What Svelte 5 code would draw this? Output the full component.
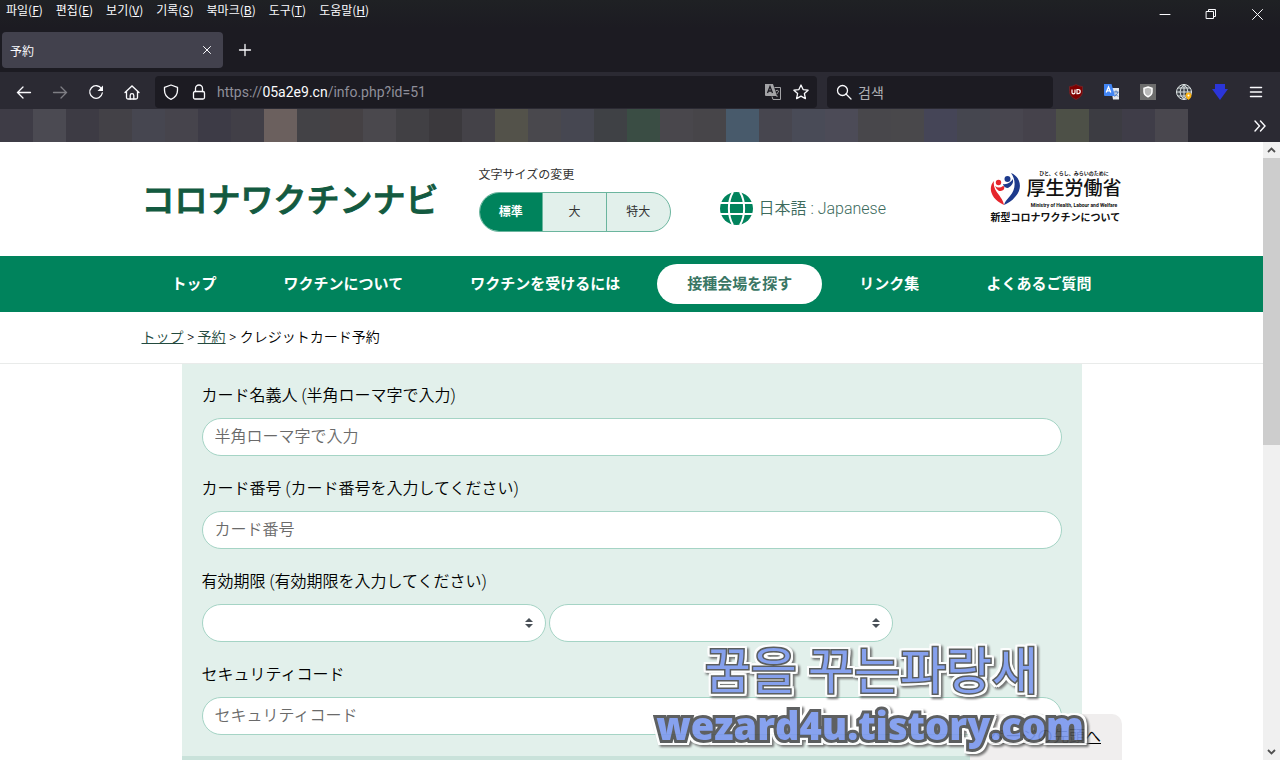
<script>
	let fontSize = $state('標準');
	let sizes = ['標準', '大', '特大'];

	let menus = [
		['파일', 'F'],
		['편집', 'E'],
		['보기', 'V'],
		['기록', 'S'],
		['북마크', 'B'],
		['도구', 'T'],
		['도움말', 'H']
	];

	let nav = [
		'トップ',
		'ワクチンについて',
		'ワクチンを受けるには',
		'接種会場を探す',
		'リンク集',
		'よくあるご質問'
	];
	let current = '接種会場を探す';

	let bookmarks = [
		'#3e3c46', '#4b4a52', '#3d3b44', '#434147', '#464650', '#46444c',
		'#3d3b46', '#413f47', '#6b605e', '#434246', '#454144', '#4a484d',
		'#414044', '#3b393d', '#444248', '#53524a', '#49484d', '#464751',
		'#3f4145', '#3a4d44', '#49474c', '#474549', '#485a6b', '#47464f',
		'#494b57', '#4c4b57', '#48474b', '#49484b', '#454557', '#45464f',
		'#48464f', '#45424b', '#4d5047', '#3c3c42', '#3f3d48', '#49474e'
	];
</script>

<div class="window">
	<header class="chrome">
		<div class="titlebar">
			<nav class="menus" aria-label="menu">
				{#each menus as [name, key]}
					<button>{name}(<u>{key}</u>)</button>
				{/each}
			</nav>
			<div class="controls">
				<button aria-label="minimize">
					<svg width="11" height="11" viewBox="0 0 11 11"><path d="M0 5.5h10" /></svg>
				</button>
				<button aria-label="restore">
					<svg width="11" height="11" viewBox="0 0 11 11"><path d="M.5 2.5h7v7h-7zM2.500 2.500v-2h7v7h-2" /></svg>
				</button>
				<button aria-label="close">
					<svg width="11" height="11" viewBox="0 0 11 11"><path d="M.5.5l10 10M10.500.5l-10 10" /></svg>
				</button>
			</div>
		</div>

		<div class="tabs">
			<div class="tab">
				<span>予約</span>
				<button aria-label="close tab">
					<svg width="10" height="10" viewBox="0 0 10 10"><path d="M1.500 1.500l7 7M8.500 1.500l-7 7" /></svg>
				</button>
			</div>
			<button class="new-tab" aria-label="new tab">
				<svg width="14" height="14" viewBox="0 0 14 14"><path d="M7 1.500v11M1.500 7h11" stroke-width="1.300" /></svg>
			</button>
		</div>

		<div class="toolbar">
			<button aria-label="back">
				<svg class="icon" viewBox="0 0 16 16"><path d="M14.500 8.500h-13M7 3L1.500 8.500 7 14" /></svg>
			</button>
			<button class="dim" aria-label="forward">
				<svg class="icon" viewBox="0 0 16 16"><path d="M1.500 8.500h13M9 3l5.500 5.500L9 14" /></svg>
			</button>
			<button aria-label="reload">
				<svg class="icon" viewBox="0 0 16 16">
					<path d="M13.500 4.800A6.300 6.300 0 1 0 14.300 9" />
					<path d="M15 1.500v5.500H9.500z" fill="currentColor" stroke="none" />
				</svg>
			</button>
			<button aria-label="home">
				<svg class="icon" viewBox="0 0 16 16">
					<path d="M1 8.500L8 2l7 6.500M2.500 7.500v6q0 1.500 1.500 1.500h8q1.500 0 1.500-1.500v-6" />
					<path d="M6.200 15v-3.500q0-1.800 1.800-1.800t1.800 1.800V15" />
				</svg>
			</button>

			<div class="field url">
				<button aria-label="protection">
					<svg class="icon" viewBox="0 0 16 16"><path d="M8 1l6.500 2.300v3C14.500 10.500 12 13.800 8 15.300 4 13.800 1.500 10.500 1.500 6.300v-3z" stroke-linejoin="round" /></svg>
				</button>
				<button aria-label="connection">
					<svg class="icon" viewBox="0 0 16 16">
						<rect x="2.500" y="7.500" width="11" height="7.500" rx="1.500" />
						<path d="M4.500 7.500V4.500a3.500 3.500 0 0 1 7 0v3" />
					</svg>
				</button>
				<span class="address">https://<b>05a2e9.cn</b>/info.php?id=51</span>
				<button aria-label="translate">
					<svg width="16" height="16" viewBox="0 0 16 16">
						<path d="M0 0h8l4 12H1Q0 12 0 11z" fill="#a3a3a6" />
						<path d="M2.500 9L5 2.500 7.500 9M3.300 7h3.400" stroke="#1c1b22" stroke-width="1.300" />
						<path d="M9.500 3.500h6v12H8l-1-3" stroke="#a3a3a6" />
						<path d="M10.500 7q2-1.500 3 0c.4 1-1.500 1.800-1.500 3M12 11.500v1.500" stroke="#a3a3a6" />
					</svg>
				</button>
				<button aria-label="bookmark">
					<svg class="icon" viewBox="0 0 16 16"><path d="M8 1l2.100 4.600 5 .6-3.700 3.400 1 5L8 12.100l-4.400 2.500 1-5L.9 6.200l5-.6z" stroke-linejoin="round" /></svg>
				</button>
			</div>

			<div class="field search">
				<svg class="icon" viewBox="0 0 16 16"><circle cx="6.500" cy="6.500" r="5" /><path d="M10 10l5 5" /></svg>
				<input type="text" placeholder="검색" aria-label="검색" />
			</div>

			<button aria-label="ublock">
				<svg width="16" height="16" viewBox="0 0 16 16">
					<path d="M8 .5q3 2 6.500 2v5q0 5-6.500 8-6.500-3-6.500-8v-5q3.500 0 6.500-2z" fill="#800000" stroke="#6e2226" />
					<path d="M4 5.500v3q0 1.300 1.500 1.300T7 8.500v-3M9 5.500v4.200h1q2.200 0 2.200-2.100T10 5.500z" stroke="#fff" stroke-width="1.200" />
				</svg>
			</button>
			<button aria-label="translator">
				<svg width="16" height="16" viewBox="0 0 16 16">
					<path d="M7 4h8v11.500H9z" fill="#e4e7ec" />
					<path d="M9.500 8h5M12 6.500V8M14 8q-1 3-3.500 4.500M11 9.500l3 3" stroke="#4b76b8" />
					<path d="M0 0h7.500l3.500 12H1q-1 0-1-1z" fill="#4285f4" />
					<path d="M2.200 8.500L4.500 3l2.300 5.500M3 6.800h3" stroke="#fff" stroke-width="1.300" />
				</svg>
			</button>
			<button aria-label="shield">
				<svg width="16" height="16" viewBox="0 0 16 16">
					<path d="M0 0h16v16H0z" fill="#6d6d6d" />
					<path d="M8 3l4 1.300v3.500q0 3.200-4 5-4-1.800-4-5V4.300z" fill="#b9b9b9" stroke="#fff" stroke-width="1.500" />
				</svg>
			</button>
			<button aria-label="network">
				<svg width="16" height="16" viewBox="0 0 16 16">
					<circle cx="8" cy="8" r="7.500" fill="#3c4148" stroke="#dde3e4" />
					<path d="M8 0v16M0 8h16M2 4h12M2 12h12M8 .5q-8 7.500 0 15M8 .5q8 7.500 0 15" stroke="#dde3e4" />
					<path d="M12.500 8.500a3 3 0 0 1 3 3c0 2-1.500 3-3 4.500-1.500-1.500-3-2.500-3-4.500a3 3 0 0 1 3-3z" fill="#fbb315" />
					<circle cx="12.500" cy="11.500" r="1" fill="#fff" />
				</svg>
			</button>
			<button aria-label="download">
				<svg width="16" height="16" viewBox="0 0 16 16"><path d="M3 0h10v5h3l-8 11-8-11h3z" fill="#2b35d8" stroke="none" /></svg>
			</button>
			<button class="app-menu" aria-label="menu">
				<svg width="14" height="12" viewBox="0 0 14 12"><path d="M1.500 1.500h11M1.500 6h11M1.500 10.500h11" stroke-width="1.500" /></svg>
			</button>
		</div>

		<div class="bookmarks">
			{#each bookmarks as color}
				<span style="background: {color}"></span>
			{/each}
			<button aria-label="more bookmarks">
				<svg width="14" height="14" viewBox="0 0 14 14"><path d="M2 2l4.500 5L2 12M7.500 2L12 7l-4.500 5" stroke-width="1.400" /></svg>
			</button>
		</div>
	</header>

	<div class="view">
		<div class="page">
			<div class="masthead container">
				<a class="logo" href="#top">コロナワクチンナビ</a>

				<div class="size">
					<p>文字サイズの変更</p>
					<div class="size-group">
						{#each sizes as size}
							<button class:active={size === fontSize} onclick={() => (fontSize = size)}>{size}</button>
						{/each}
					</div>
				</div>

				<a class="language" href="#language">
					<svg width="33" height="33" viewBox="0 0 33 33">
						<circle cx="16.500" cy="16.500" r="16.500" fill="#00835c" />
						<path
							d="M0 11h33M0 22h33M13 0C7.500 9 7.500 24 13 33M20 0c5.500 9 5.500 24 0 33"
							stroke="#fff"
							stroke-width="2"
						/>
					</svg>
					日本語 : Japanese
				</a>

				<a class="ministry" href="#ministry">
					<span class="ministry-top">
						<svg width="30" height="34" viewBox="0 0 30 34">
							<path d="M4 9C-2 15 0 27 14 33c-1-5-3-7-5-10-4-5-6-9-5-14z" fill="#e5252c" />
							<circle cx="8.500" cy="10.500" r="2.700" fill="#e5252c" />
							<path d="M5 14q4 3 8 0 2 0 1 3-1 2-5 2-3-2-4-5z" fill="#e5252c" />
							<path d="M21 1c10 4 12 16 4 24-3 4-7 6-11 8 1-4 3-5 6-9 6-7 6-16 1-23z" fill="#1d3a8c" />
							<circle cx="17.500" cy="7" r="3" fill="#1d3a8c" />
							<path d="M13 12q6 1 10-5 1 6-5 9-4 0-5-4z" fill="#1d3a8c" />
						</svg>
						<span class="ministry-name">
							<small>ひと、くらし、みらいのために</small>
							<strong>厚生労働省</strong>
							<small>Ministry of Health, Labour and Welfare</small>
						</span>
					</span>
					<span class="ministry-about">新型コロナワクチンについて</span>
				</a>
			</div>

			<nav class="main-nav">
				<div class="container">
					{#each nav as item}
						<a href="#nav" class:current={item === current}>{item}</a>
					{/each}
				</div>
			</nav>

			<div class="breadcrumb">
				<p class="container"><a href="#top">トップ</a> &gt; <a href="#reserve">予約</a> &gt; クレジットカード予約</p>
			</div>

			<form onsubmit={(e) => e.preventDefault()}>
				<div class="row">
					<label for="holder">カード名義人 (半角ローマ字で入力)</label>
					<input id="holder" type="text" placeholder="半角ローマ字で入力" />
				</div>
				<div class="row">
					<label for="number">カード番号 (カード番号を入力してください)</label>
					<input id="number" type="text" placeholder="カード番号" />
				</div>
				<div class="row">
					<label for="month">有効期限 (有効期限を入力してください)</label>
					<div class="selects">
						{#each ['month', 'year'] as id}
							<div class="select">
								<select {id} aria-label={id}><option></option></select>
								<svg width="8" height="10" viewBox="0 0 8 10"><path d="M4 0l4 4H0zM4 10L0 6h8z" fill="#495057" /></svg>
							</div>
						{/each}
					</div>
				</div>
				<div class="row">
					<label for="code">セキュリティコード</label>
					<input id="code" type="text" placeholder="セキュリティコード" />
				</div>
				<div class="band"></div>
			</form>

			<a class="page-top" href="#top">ページの先頭へ</a>

			<div class="watermark">
				<span class="korean">꿈을 꾸는파랑새</span>
				<span class="latin">wezard4u.tistory.com</span>
			</div>
		</div>

		<div class="scrollbar">
			<svg width="9" height="6" viewBox="0 0 9 6"><path d="M1 5l3.500-3.500L8 5" stroke="#505050" stroke-width="1.800" /></svg>
			<div class="track"><div class="thumb"></div></div>
			<svg width="9" height="6" viewBox="0 0 9 6"><path d="M1 1l3.500 3.500L8 1" stroke="#505050" stroke-width="1.800" /></svg>
		</div>
	</div>
</div>

<style>
	:global(body) {
		background: #fff;
	}

	* {
		box-sizing: border-box;
	}

	p {
		margin: 0;
	}

	button {
		display: flex;
		align-items: center;
		justify-content: center;
		padding: 0;
		border: 0;
		background: none;
		color: inherit;
		font: inherit;
	}

	svg {
		display: block;
		flex: none;
		fill: none;
		stroke: none;
	}

	.chrome svg {
		overflow: visible;
	}

	.window {
		display: flex;
		flex-direction: column;
		height: 100vh;
		overflow: hidden;
	}

	/* browser chrome */

	.chrome {
		flex: none;
		background: #1c1b22;
		color: #fbfbfe;
		font-family: 'Noto Sans CJK KR', sans-serif;
		font-size: 12px;
	}

	.controls svg,
	.tabs svg,
	.toolbar .icon,
	.app-menu svg,
	.bookmarks svg {
		stroke: currentColor;
		stroke-linecap: round;
	}

	.icon {
		width: 16px;
		height: 16px;
		stroke-width: 1.3;
	}

	.titlebar {
		display: flex;
		justify-content: space-between;
		height: 28px;
		background: linear-gradient(#1f2124, #1c1b22);
	}

	.menus {
		display: flex;
		gap: 13px;
		height: 18px;
		padding-left: 6px;
	}

	.controls {
		display: flex;
	}

	.controls button {
		width: 46px;
	}

	.tabs {
		display: flex;
		align-items: center;
		height: 44px;
		padding-left: 2px;
	}

	.tab {
		display: flex;
		align-items: center;
		justify-content: space-between;
		width: 221px;
		height: 36px;
		padding: 0 11px 0 8px;
		border-radius: 4px;
		background: #42414d;
		font-family: 'Noto Sans CJK JP', sans-serif;
	}

	.new-tab {
		width: 43px;
		height: 36px;
	}

	.toolbar {
		display: flex;
		align-items: center;
		height: 37px;
		padding: 3px 6px 0;
		background: #2b2a33;
	}

	.toolbar > button {
		width: 36px;
		height: 32px;
	}

	.dim {
		opacity: 0.4;
	}

	.field {
		display: flex;
		align-items: center;
		height: 32px;
		margin: 0 5px;
		border-radius: 4px;
		background: #1c1b22;
	}

	.url {
		flex: 1;
		padding: 0 2px;
	}

	.url button {
		width: 28px;
		height: 28px;
	}

	.address {
		flex: 1;
		padding-left: 4px;
		color: #8f8f9a;
		font: 14px/28px Roboto, sans-serif;
	}

	.address b {
		color: #fbfbfe;
		font-weight: 400;
	}

	.search {
		width: 226px;
		gap: 6px;
		padding: 0 9px;
	}

	.search input {
		flex: 1;
		min-width: 0;
		padding: 0;
		border: 0;
		background: none;
		color: inherit;
		font: 14px 'Noto Sans CJK KR', sans-serif;
	}

	.search input::placeholder {
		color: #b0b0b5;
	}

	.bookmarks {
		display: flex;
		height: 33px;
		background: #2b2a33;
	}

	.bookmarks span {
		flex: none;
		width: 33px;
	}

	.bookmarks button {
		margin: 0 13px 0 auto;
	}

	/* site */

	.view {
		display: flex;
		flex: 1;
		min-height: 0;
	}

	.page {
		position: relative;
		flex: 1;
		overflow: hidden;
		background: #fff;
		color: #000;
		font-family: Roboto, 'Noto Sans CJK JP', sans-serif;
		font-size: 16px;
		font-weight: 350;
		line-height: 24px;
	}

	.container {
		width: 100%;
		max-width: 980px;
		margin: 0 auto;
	}

	.masthead {
		display: flex;
		align-items: center;
		height: 114px;
	}

	.logo {
		margin-right: 40px;
		padding-top: 3px;
		color: #135a40;
		font-size: 33px;
		font-weight: 500;
		line-height: 40px;
		text-decoration: none;
		white-space: nowrap;
		-webkit-text-stroke: 1px #135a40;
	}

	.size p {
		margin-bottom: 8px;
		color: #333;
		font-size: 12px;
		font-weight: 400;
		line-height: 18px;
	}

	.size-group {
		display: flex;
		width: 192px;
		height: 40px;
		border: 1px solid #6bb59e;
		border-radius: 20px;
		overflow: hidden;
		background: #e2f0eb;
	}

	.size-group button {
		flex: 1;
		color: #333;
		font-size: 12px;
		font-weight: 400;
	}

	.size-group button + button {
		border-left: 1px solid #6bb59e;
	}

	.size-group .active {
		background: #00835c;
		color: #fff;
		font-weight: 700;
	}

	.language {
		display: flex;
		align-items: center;
		gap: 6px;
		margin: 19px 0 0 49px;
		color: #3c6a5c;
		text-decoration: none;
	}

	.ministry {
		display: flex;
		flex-direction: column;
		margin-left: auto;
		color: #111;
		text-decoration: none;
	}

	.ministry-top {
		display: flex;
		align-items: center;
		gap: 6px;
	}

	.ministry-name {
		display: flex;
		flex-direction: column;
		align-items: center;
	}

	.ministry-name small {
		font-size: 5px;
		font-weight: 700;
		line-height: 6px;
		white-space: nowrap;
	}

	.ministry-name strong {
		font-size: 19px;
		font-weight: 500;
		line-height: 26px;
	}

	.ministry-about {
		font-size: 10px;
		font-weight: 700;
		line-height: 20px;
	}

	.main-nav {
		padding: 8px 0;
		background: #00835c;
	}

	.main-nav .container {
		display: flex;
		justify-content: space-between;
	}

	.main-nav a {
		padding: 0 30px;
		border-radius: 20px;
		color: #fff;
		font-size: 15px;
		font-weight: 700;
		line-height: 40px;
		text-decoration: none;
		white-space: nowrap;
	}

	.main-nav .current {
		background: #fff;
		color: #3a7664;
	}

	.breadcrumb {
		padding: 13px 0 14px;
		border-bottom: 1px solid #e9ebea;
		font-size: 14px;
	}

	.breadcrumb a {
		color: #234a3e;
	}

	form {
		max-width: 900px;
		margin: 0 auto;
		padding-top: 20px;
		background: #e2f0eb;
	}

	.row {
		margin: 0 20px 21px;
	}

	label {
		display: block;
		margin-bottom: 10px;
	}

	.row input,
	select {
		display: block;
		width: 100%;
		height: 38px;
		padding: 0 12px 2px;
		border: 1px solid #a5d4c5;
		border-radius: 19px;
		background: #fff;
		font: inherit;
	}

	.row input::placeholder {
		color: #6a6a6a;
	}

	.selects {
		display: flex;
		gap: 3px;
	}

	.select {
		position: relative;
		width: 40%;
	}

	select {
		appearance: none;
	}

	.select svg {
		position: absolute;
		top: 14px;
		right: 13px;
		pointer-events: none;
	}

	.band {
		height: 40px;
		background: #c9e2da;
	}

	.page-top {
		position: absolute;
		right: 141px;
		bottom: 0;
		padding: 11px 21px 11px 19px;
		border-radius: 10px 10px 0 0;
		background: #f0eeee;
		color: #000;
	}

	.watermark {
		position: absolute;
		right: 179px;
		bottom: 7px;
		display: flex;
		flex-direction: column;
		color: #7b98ee;
		paint-order: stroke fill;
		filter: drop-shadow(2px 0 #fff) drop-shadow(-2px 0 #fff) drop-shadow(0 2px #fff)
			drop-shadow(0 -2px #fff) drop-shadow(2px 2px 1px #666);
		opacity: 0.9;
		pointer-events: none;
		white-space: nowrap;
	}

	.korean {
		align-self: flex-end;
		margin-right: 46px;
		font: 400 50px/60px 'Noto Sans CJK KR', sans-serif;
		-webkit-text-stroke: 3px #4d4f50;
	}

	.latin {
		font: 800 38px/56px 'Open Sans', sans-serif;
		-webkit-text-stroke: 6px #4d4f50;
	}

	.scrollbar {
		display: flex;
		flex: none;
		flex-direction: column;
		align-items: center;
		gap: 5px;
		width: 17px;
		padding: 5px 0;
		background: #f0f0f0;
	}

	.track {
		flex: 1;
		width: 100%;
	}

	.thumb {
		height: 49%;
		background: #cdcdcd;
	}
</style>
